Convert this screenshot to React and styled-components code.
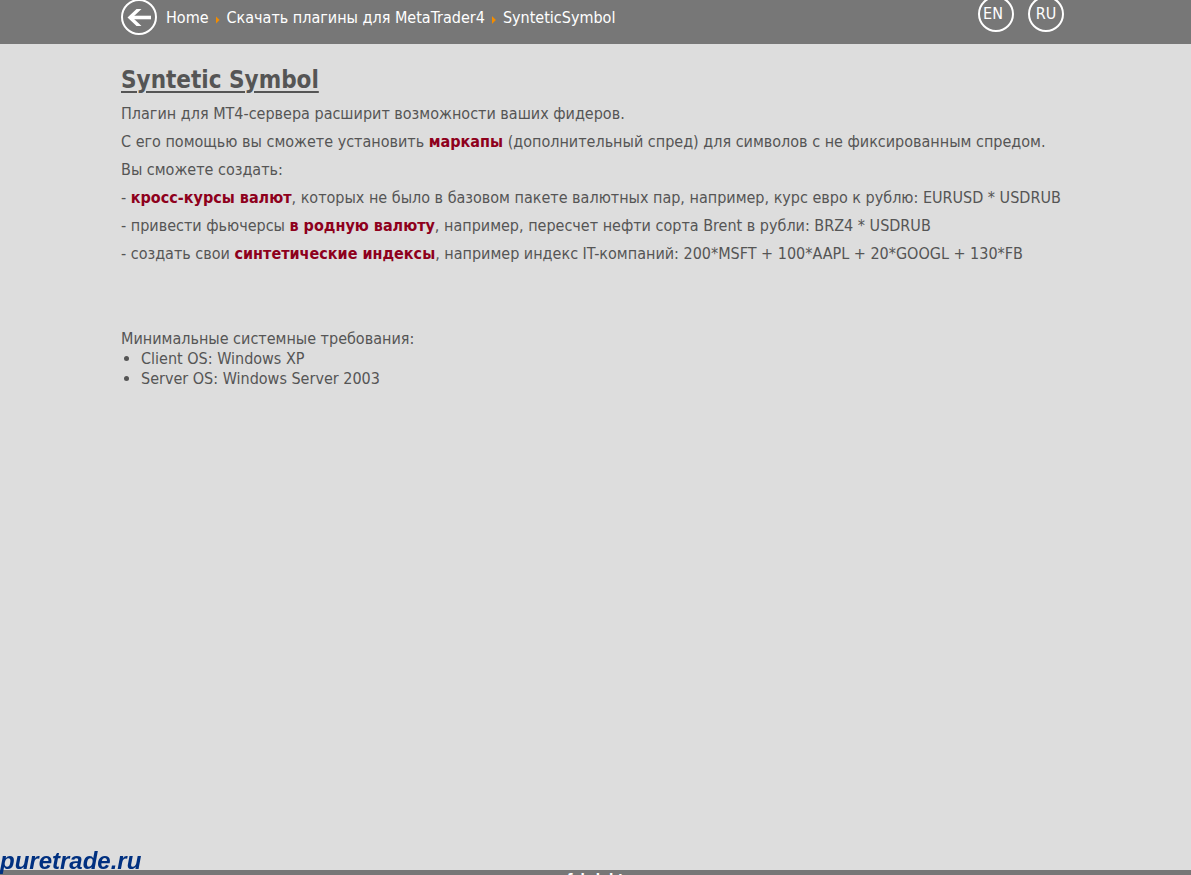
import React from "react";
import styled, { createGlobalStyle } from "styled-components";

const GlobalStyle = createGlobalStyle`
  * {
    box-sizing: border-box;
  }

  body {
    margin: 0;
    background: #dddddd;
    color: #555555;
    font-family: "DejaVu Sans Condensed", "DejaVu Sans", sans-serif;
    font-size: 16px;
    line-height: 20px;
  }
`;

const Page = styled.div`
  display: flex;
  flex-direction: column;
  height: 100vh;
  overflow: hidden;
`;

const Header = styled.header`
  flex: none;
  display: flex;
  justify-content: space-between;
  align-items: flex-start;
  height: 44px;
  padding: 0 127px 0 121px;
  background: #777777;
  color: white;
`;

const Breadcrumbs = styled.nav`
  display: flex;
  align-items: center;
  gap: 7px;
  height: 36px;
  white-space: nowrap;

  a {
    color: white;
    text-decoration: none;
  }
`;

const BackLink = styled.a`
  display: flex;
  margin-right: 2px;

  svg {
    display: block;
    width: 36px;
    height: 36px;
  }
`;

const Separator = styled.span`
  width: 4px;
  height: 8px;
  margin-top: 4px;
  background: #f28c00;
  clip-path: polygon(0 0, 100% 50%, 0 100%);
`;

const Languages = styled.div`
  display: flex;
  gap: 14px;
  margin-top: -4px;
`;

const LanguageButton = styled.button`
  width: 36px;
  height: 36px;
  padding: 0 6px 0 0;
  border: 2px solid white;
  border-radius: 50%;
  background: transparent;
  color: white;
  font: inherit;
  text-align: center;
  cursor: pointer;

  &:last-child {
    padding: 0;
  }
`;

const Content = styled.main`
  flex: 1;
  padding: 22px 121px 0;

  h1 {
    margin: 0 0 10px;
    font-size: 24px;
    line-height: 28px;
    text-decoration: underline;
    text-decoration-thickness: 2px;
    text-underline-offset: 3px;
  }

  p {
    margin: 0 0 8px;
  }

  strong {
    color: #8e001c;
  }
`;

const Requirements = styled.section`
  margin-top: 65px;

  h2 {
    margin: 0;
    font-size: 16px;
    font-weight: normal;
  }

  ul {
    margin: 0;
    padding-left: 20px;
  }
`;

const Watermark = styled.div`
  position: fixed;
  left: 0;
  bottom: 0;
  color: #003080;
  font-family: "Liberation Sans", Arial, sans-serif;
  font-size: 24px;
  font-style: italic;
  font-weight: bold;
  line-height: 28px;
`;

const Footer = styled.footer`
  flex: none;
  height: 5px;
  overflow: hidden;
  background: #777777;
  color: white;
  font-size: 14px;
  font-weight: bold;
  line-height: 18px;
  text-align: center;
`;

const crumbs = ["Home", "Скачать плагины для MetaTrader4", "SynteticSymbol"];

const App = () => {
  return (
    <>
      <GlobalStyle />
      <Page>
        <Header>
          <Breadcrumbs>
            <BackLink href="#" aria-label="Back">
              <svg viewBox="0 0 36 36" fill="none" stroke="white">
                <circle cx="18" cy="17" r="17" strokeWidth="2" />
                <path d="M9 17.5h21" strokeWidth="3.6" />
                <path
                  d="M6.5 17.5L15.5 9h5l-9 8.5 9 8.5h-5z"
                  fill="white"
                  stroke="none"
                />
              </svg>
            </BackLink>
            {crumbs.map((crumb, index) => (
              <React.Fragment key={crumb}>
                {index > 0 && <Separator />}
                <a href="#">{crumb}</a>
              </React.Fragment>
            ))}
          </Breadcrumbs>
          <Languages>
            <LanguageButton>EN</LanguageButton>
            <LanguageButton>RU</LanguageButton>
          </Languages>
        </Header>

        <Content>
          <h1>Syntetic Symbol</h1>
          <p>Плагин для МТ4-сервера расширит возможности ваших фидеров.</p>
          <p>
            С его помощью вы сможете установить <strong>маркапы</strong>{" "}
            (дополнительный спред) для символов с не фиксированным спредом.
          </p>
          <p>Вы сможете создать:</p>
          <p>
            - <strong>кросс-курсы валют</strong>, которых не было в базовом
            пакете валютных пар, например, курс евро к рублю: EURUSD * USDRUB
          </p>
          <p>
            - привести фьючерсы <strong>в родную валюту</strong>, например,
            пересчет нефти сорта Brent в рубли: BRZ4 * USDRUB
          </p>
          <p>
            - создать свои <strong>синтетические индексы</strong>, например
            индекс IT-компаний: 200*MSFT + 100*AAPL + 20*GOOGL + 130*FB
          </p>
          <Requirements>
            <h2>Минимальные системные требования:</h2>
            <ul>
              <li>Client OS: Windows XP</li>
              <li>Server OS: Windows Server 2003</li>
            </ul>
          </Requirements>
        </Content>

        <Footer>fxbright</Footer>
      </Page>
      <Watermark>puretrade.ru</Watermark>
    </>
  );
};

export default App;
